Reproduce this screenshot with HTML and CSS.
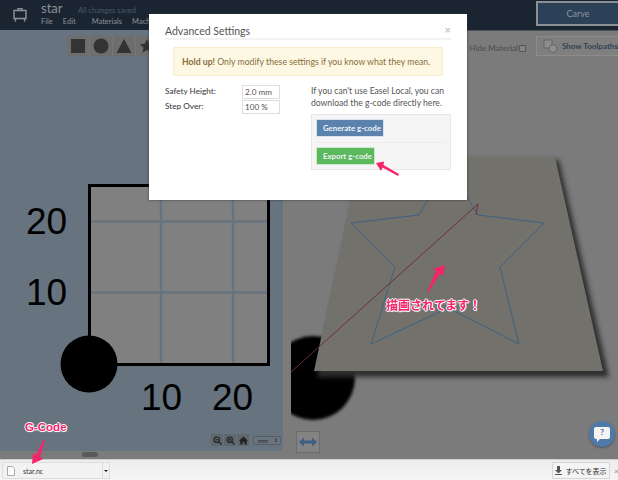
FILE: index.html
```html
<!DOCTYPE html>
<html lang="en">
<head>
<meta charset="utf-8">
<title>Easel - Advanced Settings</title>
<link rel="stylesheet" href="styles.css">
</head>
<body>
<div class="app">
  <header class="topbar">
    <svg class="logo" width="14" height="14" viewBox="0 0 14 14"><path d="M1 2.5h12v8H1zM3 10.5l-1 3M11 10.5l1 3M5 2.5V.5h4v2" fill="none" stroke="#8b9299" stroke-width="1.4"/></svg>
    <div class="titleblock">
      <div class="titleline"><span class="docname">star</span><span class="saved">All changes saved</span></div>
      <nav class="menu"><span>File</span><span>Edit</span><span>Materials</span><span>Machine</span></nav>
    </div>
    <button class="carve">Carve</button>
  </header>

  <main class="workspace">
    <section class="designpane">
      <svg class="canvas" width="283" height="421" viewBox="0 30 283 421">
        <rect x="89.500" y="185.500" width="179" height="179" fill="#808080"/>
        <path d="M161 186v178M233 186v178M90 221.500h178M90 292.500h178" stroke="#67737f" stroke-width="2.500" fill="none"/>
        <rect x="89.500" y="185.500" width="179" height="179" fill="none" stroke="#000" stroke-width="3"/>
        <circle cx="89" cy="364" r="28.500" fill="#000"/>
        <text class="axis" x="26" y="234">20</text>
        <text class="axis" x="26" y="305">10</text>
        <text class="axis" x="141" y="410">10</text>
        <text class="axis" x="212" y="410">20</text>
      </svg>
      <div class="shapes">
        <span class="shape"><svg width="16" height="16"><rect x="1" y="1" width="14" height="14" fill="#333"/></svg></span>
        <span class="shape"><svg width="16" height="16"><circle cx="8" cy="8" r="7.500" fill="#333"/></svg></span>
        <span class="shape"><svg width="16" height="16"><path d="M8 1l7.500 14H.5z" fill="#333"/></svg></span>
        <span class="shape"><svg width="16" height="16"><path d="M8 1l2.100 4.800 5.200.5-3.900 3.400 1.200 5.100L8 12.100l-4.600 2.700 1.200-5.100L.7 6.300l5.200-.5z" fill="#333"/></svg></span>
      </div>
      <div class="zoomctl">
        <span class="zbtn"><svg width="9" height="9" viewBox="0 0 9 9"><circle cx="3.700" cy="3.700" r="2.700" fill="none" stroke="#222" stroke-width="1.100"/><path d="M5.700 5.700L8.500 8.500M2.300 3.700h2.800" stroke="#222" stroke-width="1.100"/></svg></span>
        <span class="zbtn"><svg width="9" height="9" viewBox="0 0 9 9"><circle cx="3.700" cy="3.700" r="2.700" fill="none" stroke="#222" stroke-width="1.100"/><path d="M5.700 5.700L8.500 8.500M2.300 3.700h2.800M3.700 2.300v2.800" stroke="#222" stroke-width="1.100"/></svg></span>
        <span class="zbtn"><svg width="9" height="9" viewBox="0 0 9 9"><path d="M4.500.5L9 4.700H7.700V8.500H5.400V6H3.600v2.500H1.300V4.700H0z" fill="#222"/></svg></span>
        <span class="unit">mm<i>⇕</i></span>
      </div>
      <span class="handle"></span>
    </section>

    <section class="previewpane">
      <svg class="canvas" width="327" height="429" viewBox="291 30 327 429">
        <defs>
          <filter id="soft" x="-30%" y="-30%" width="160%" height="160%"><feGaussianBlur stdDeviation="1.500"/></filter>
          <filter id="softer" x="-10%" y="-10%" width="120%" height="120%"><feGaussianBlur stdDeviation="2.500"/></filter>
        </defs>
        <circle cx="313" cy="378" r="42" fill="#000" filter="url(#soft)"/>
        <path d="M360 157H556L606 374H314z" fill="#2e2e2e" filter="url(#softer)" transform="translate(3 3)"/>
        <path d="M360 157H555L603 371H314z" fill="#72716c"/>
        <path d="M448 165L478 215 544 223 500 267 519 344 448 308 371 344 395 267 351 223 419 215z" fill="none" stroke="#3e627f" stroke-width="1"/>
        <path d="M291 372L478 204 476 215" fill="none" stroke="#6d2d3d" stroke-width="1"/>
      </svg>
      <div class="viewctl">
        <button class="viewbtn"><svg width="18" height="10" viewBox="0 0 18 10"><path d="M0 5l5-4.500V3.500h8V.5L18 5l-5 4.500V6.500H5v3z" fill="#3b5f85"/></svg></button>
      </div>
      <div class="previewtools">
        <label class="hide">Hide Material<span class="check"></span></label>
        <button class="toolpaths">
          <svg width="15" height="14" viewBox="0 0 15 14"><rect x="1" y="1" width="8" height="8" fill="#8e8e8e" stroke="#666"/><circle cx="10" cy="9.500" r="4" fill="#8e8e8e" stroke="#666"/></svg>
          Show Toolpaths
        </button>
      </div>
      <button class="help" aria-label="Help">
        <svg width="16" height="15" viewBox="0 0 16 15"><path d="M2 0h12a2 2 0 0 1 2 2v8a2 2 0 0 1-2 2H6l-3 3v-3H2a2 2 0 0 1-2-2V2a2 2 0 0 1 2-2z" fill="#f4f4f4"/></svg>
        <b>?</b>
      </button>
    </section>
  </main>

  <footer class="downloads">
    <div class="dlitem">
      <div class="dlfile">
        <svg width="8" height="10" viewBox="0 0 8 10"><path d="M.5.5h5l2 2v7h-7z" fill="#fbfbfb" stroke="#aaa"/></svg>
        <span>star.nc</span>
      </div>
      <div class="dlcaret"></div>
    </div>
    <div class="dlright">
      <button class="showall">
        <svg width="7" height="9" viewBox="0 0 7 9"><path d="M2 0h3v4h2L3.500 7.500 0 4h2zM0 8h7v1H0z" fill="#555"/></svg>
        すべてを表示
      </button>
      <span class="dlclose">×</span>
    </div>
  </footer>

  <div class="modal">
    <div class="modalhead"><h2>Advanced Settings</h2><span class="close">×</span></div>
    <div class="alert"><strong>Hold up!</strong> Only modify these settings if you know what they mean.</div>
    <div class="modalbody">
      <div class="fields">
        <div class="field"><label>Safety Height:</label><input value="2.0 mm"></div>
        <div class="field"><label>Step Over:</label><input value="100 %"></div>
      </div>
      <div class="export">
        <p>If you can't use Easel Local, you can download the g-code directly here.</p>
        <div class="well">
          <div class="wellrow"><button class="btn blue">Generate g-code</button></div>
          <div class="wellrow"><button class="btn green">Export g-code</button></div>
        </div>
      </div>
    </div>
  </div>

  <svg class="arrow arrow-export" width="26" height="16" viewBox="0 0 26 16"><path d="M1 2L9 .5 8.500 4 24 13 23 15 7.500 6.500 6 10z" fill="#f5246b"/></svg>
  <svg class="arrow arrow-center" width="20" height="30" viewBox="0 0 20 30"><path d="M18 1L16 12 13 9.500 1 29 0 28 9 7 5.500 5z" fill="#f5246b"/></svg>
  <svg class="arrow arrow-gcode" width="16" height="26" viewBox="0 0 16 26"><path d="M1 25L2 14 5 16 13 0 14 1 9 18 12 20z" fill="#f5246b"/></svg>
  <span class="note note-draw">描画されてます！</span>
  <span class="note note-gcode">G-Code</span>
</div>
</body>
</html>
```

FILE: styles.css
```css
* { box-sizing: border-box; }
html, body { margin: 0; padding: 0; }
body { width: 618px; height: 480px; overflow: hidden; font-family: Lato, "Liberation Sans", sans-serif; }
button { font-family: inherit; cursor: default; }

.app { position: relative; width: 618px; height: 480px; display: flex; flex-direction: column; overflow: hidden; background: #7b7b7b; }

.topbar { height: 31px; flex: none; display: flex; align-items: flex-start; background: #1a2531; border-bottom: 1px solid #4a525a; color: #8b9299; }
.logo { margin: 8px 0 0 13px; }
.titleblock { margin-left: 14px; flex: 1; }
.titleline { display: flex; align-items: baseline; height: 17px; padding-top: 0; }
.docname { font-size: 13px; line-height: 16px; color: #8b9299; width: 37px; }
.saved { font-size: 7.500px; color: #4c5864; }
.menu { display: flex; font-size: 7.500px; line-height: 10px; margin-top: 0; color: #8b9299; }
.menu span { margin-right: 10px; }
.menu span:nth-child(2) { margin-right: 16px; }
.carve { width: 82px; height: 25px; margin-top: 1px; background: #2c4158; border: 2px solid #8b9094; border-right: 0; color: #8b939b; font-size: 9px; padding: 0; }

.workspace { flex: 1; display: flex; min-height: 0; }
.designpane { position: relative; width: 291px; flex: none; background: #7b7b7b; }
.designpane .canvas { position: absolute; left: 0; top: -1px; background: #67737f; }
.axis { font-family: "Liberation Sans", sans-serif; font-size: 37px; fill: #000; }
.shapes { position: absolute; left: 67px; top: 5px; display: flex; background: #6e6e6e; height: 20px; }
.shape { width: 23px; height: 20px; display: flex; align-items: center; justify-content: center; border-right: 1px solid #777; }
.zoomctl { position: absolute; left: 211px; top: 403px; display: flex; align-items: center; gap: 1px; }
.zbtn { width: 12px; height: 12px; display: flex; align-items: center; justify-content: center; background: #5e666e; }
.unit { margin-left: 3px; width: 28px; height: 9px; border: 1px solid #555d65; border-radius: 2px; background: #6a747f; font-size: 6px; line-height: 7px; padding-left: 4px; color: #222; display: flex; justify-content: space-between; }
.unit i { font-style: normal; font-size: 5px; padding-right: 2px; }
.handle { position: absolute; left: 82px; top: 421px; width: 16px; height: 5px; border-radius: 3px; background: #5a5a5a; }

.previewpane { position: relative; flex: 1; background: #7b7b7b; overflow: hidden; }
.previewpane .canvas { position: absolute; left: 0; top: -1px; }
.viewctl { position: absolute; left: 5px; top: 400px; }
.viewbtn { width: 24px; height: 22px; padding: 0; display: flex; align-items: center; justify-content: center; background: #838383; border: 1px solid #6c6c6c; }
.previewtools { position: absolute; right: 0; top: 5px; display: flex; align-items: center; }
.hide { font-size: 8px; font-weight: 700; color: #565656; display: flex; align-items: center; gap: 1px; margin-right: 10px; margin-top: 4px; }
.check { width: 7px; height: 7px; border: 1px solid #555; border-radius: 1px; background: #868686; }
.toolpaths { width: 82px; height: 20px; padding: 0 0 0 6px; display: flex; align-items: center; gap: 4px; background: #7f7f7f; border: 1px solid #8c8c8c; border-right: 0; font-size: 8px; font-weight: 700; color: #2f4357; white-space: nowrap; }
.help { position: absolute; right: 3px; top: 390px; width: 26px; height: 26px; padding: 0; border: 0; border-radius: 50%; background: #4f79a8; display: flex; align-items: center; justify-content: center; box-shadow: 0 1px 2px #555; }
.help b { position: absolute; left: 0; right: 0; top: 6px; font-size: 8px; color: #45698f; }

.downloads { height: 21px; flex: none; display: flex; justify-content: space-between; align-items: flex-start; background: linear-gradient(#ededed, #f5f5f5); border-top: 1px solid #cfcfcf; }
.dlitem { display: flex; margin: 2px 0 0 2px; height: 17px; border: 1px solid #ddd; background: #f2f2f2; }
.dlfile { width: 100px; display: flex; align-items: center; gap: 8px; padding-left: 4px; border-right: 1px solid #ddd; font-size: 7px; color: #333; }
.dlcaret { width: 6px; position: relative; }
.dlcaret::after { content: ""; position: absolute; left: 1px; top: 7px; border: 2px solid transparent; border-top-color: #222; }
.dlright { display: flex; align-items: center; margin-top: 2px; }
.showall { width: 58px; height: 17px; padding: 0; display: flex; align-items: center; justify-content: center; gap: 3px; background: #f4f4f4; border: 1px solid #d6d6d6; border-radius: 1px; font-family: "Noto Sans CJK JP", sans-serif; font-size: 7px; color: #333; }
.dlclose { margin-left: 4px; width: 4px; font-size: 8px; color: #888; }

.modal { position: absolute; left: 149px; top: 14px; width: 318px; height: 186px; padding: 10px 16px 0; background: #fff; box-shadow: 0 0 2px #333; color: #555; }
.modalhead { display: flex; justify-content: space-between; align-items: center; height: 16px; border-bottom: 2px solid #f3f3f3; }
.modalhead h2 { margin: 0; font-size: 10.500px; font-weight: 400; color: #555; line-height: 13px; }
.close { font-size: 11px; font-weight: 700; color: #c4c4c4; margin-right: 0; margin-top: -3px; }
.alert { margin: 7px 8px 0; height: 29px; line-height: 28px; padding-left: 8px; background: #fcf8e3; border: 1px solid #faebcc; border-radius: 2px; font-size: 8.700px; color: #8a6d3b; white-space: nowrap; }
.modalbody { display: flex; margin-top: 9px; }
.fields { width: 146px; flex: none; display: flex; flex-direction: column; gap: 1px; }
.field { display: flex; justify-content: space-between; align-items: center; height: 14px; padding-right: 0; width: 115px; }
.field label { font-size: 8.200px; color: #444; font-weight: 500; margin-top: -2px; }
.field input { width: 38px; height: 14px; padding: 0 2px; border: 1px solid #ddd; font: 8.200px Lato, sans-serif; color: #555; outline: 0; }
.export { flex: 1; }
.export p { margin: 0; font-size: 8.600px; line-height: 12px; color: #555; height: 24px; }
.well { margin-top: 5px; width: 140px; height: 56px; padding: 4px; background: #f5f5f5; border: 1px solid #e6e6e6; }
.wellrow { height: 23px; }
.wellrow + .wellrow { height: 24px; border-top: 1px solid #ececec; padding-top: 4px; margin-top: 0; }
.btn { display: block; height: 18px; padding: 0 6px; border: 1px solid #d8e2ec; font-size: 7.800px; font-weight: 700; color: #eef3f8; white-space: nowrap; }
.blue { width: 68px; background: #5b82ad; }
.green { width: 59px; background: #5cb85c; border-color: #cfe9cf; }

.arrow { position: absolute; }
.arrow-export { left: 375px; top: 161px; }
.arrow-center { left: 427px; top: 264px; }
.arrow-gcode { left: 31px; top: 439px; }
.note { position: absolute; color: #f5246b; font-weight: 700; white-space: nowrap; text-shadow: 1px 0 0 #fff, -1px 0 0 #fff, 0 1px 0 #fff, 0 -1px 0 #fff, 1px 1px 1px #ddd; }
.note-draw { left: 386px; top: 296px; font-family: "Noto Sans CJK JP", sans-serif; font-size: 12px; line-height: 17px; }
.note-gcode { left: 25px; top: 420px; font-family: "Liberation Sans", sans-serif; font-size: 11.500px; line-height: 14px; }
```
